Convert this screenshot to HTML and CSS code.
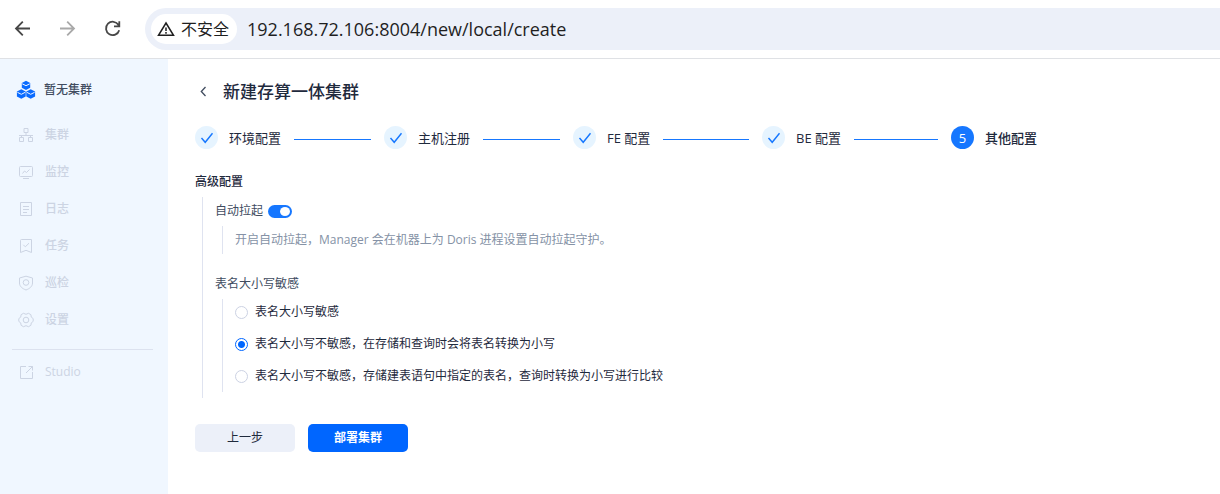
FILE: index.html
```html
<!DOCTYPE html>
<html lang="zh-CN">
<head>
  <meta charset="UTF-8" />
  <meta name="viewport" content="width=device-width, initial-scale=1" />
  <title>新建存算一体集群</title>
  <link rel="stylesheet" href="styles.css">
</head>
<body>

  <header class="toolbar">
    <button type="button" class="tool-btn" aria-label="后退">
      <svg width="20" height="20" viewBox="0 0 20 20"><path d="M17 9.500H3.500M9.800 2.700L3 9.500l6.800 6.800" /></svg>
    </button>
    <button type="button" class="tool-btn" aria-label="前进" disabled>
      <svg width="20" height="20" viewBox="0 0 20 20"><path d="M2 9.500h13.500M9.200 2.700l6.800 6.800-6.800 6.800" /></svg>
    </button>
    <button type="button" class="tool-btn" aria-label="刷新">
      <svg width="20" height="20" viewBox="0 0 20 20"><path d="M15.500 6A6.700 6.700 0 1 0 16.200 11.200M16.300 2.300v5h-5.300" /></svg>
    </button>
    <div class="address">
      <button type="button" class="security">
        <svg width="18" height="18" viewBox="0 0 18 18"><path d="M9 3L16.500 15.300H1.500zM9 7.500v3.500M9 12v1.800" /></svg>
        不安全
      </button>
      <input class="url" type="text" value="192.168.72.106:8004/new/local/create" aria-label="地址" />
    </div>
  </header>

  <div class="layout">
    <aside class="sidebar">
      <div class="cluster">
        <svg class="cluster-icon" width="20" height="20" viewBox="0 0 20 20">
          <path class="cube" d="M10 .8l4.200 2.300v4.700L10 10.100 5.800 7.800V3.100zM5.300 9.200l4.400 2.400v4.800l-4.400 2.400-4.400-2.400v-4.800zM14.700 9.200l4.400 2.400v4.800l-4.400 2.400-4.400-2.400v-4.800z" />
          <path class="cube-edge" d="M6.200 3.800L10 5.700l3.800-1.900M1.400 12.300l3.900 2 3.900-2M10.800 12.300l3.900 2 3.900-2" />
        </svg>
        <span>暂无集群</span>
      </div>
      <nav class="menu">
        <a href="#cluster">
          <svg width="16" height="16" viewBox="0 0 16 16"><path d="M6 1.500h4v4H6zM8 5.500V8M1 8.500h14M3.500 8.500v2M12.500 8.500v2M1.500 10.500h4v4h-4zM10.500 10.500h4v4h-4z" /></svg>
          集群
        </a>
        <a href="#monitor">
          <svg width="16" height="16" viewBox="0 0 16 16"><path d="M2.500 2.500h11a1 1 0 0 1 1 1v8a1 1 0 0 1-1 1h-11a1 1 0 0 1-1-1v-8a1 1 0 0 1 1-1zM4.500 9.500l2-2.500 2 1.500 3-3M5 14.500h6" /></svg>
          监控
        </a>
        <a href="#log">
          <svg width="16" height="16" viewBox="0 0 16 16"><path d="M2.500 1.500h11v13h-11zM5 5.500h6M5 8.500h6M5 11.500h4" /></svg>
          日志
        </a>
        <a href="#task">
          <svg width="16" height="16" viewBox="0 0 16 16"><path d="M2.500 14.500v-12a1 1 0 0 1 1-1h10v13L8 12.300zM5.300 6.800l2 2 3.700-3.600" /></svg>
          任务
        </a>
        <a href="#inspect">
          <svg width="16" height="16" viewBox="0 0 16 16"><path d="M8 1.200l6.500 1.800v5c0 3.400-2.800 5.600-6.500 7-3.700-1.400-6.500-3.600-6.500-7V3z" /><circle cx="8" cy="7.500" r="2.800" /></svg>
          巡检
        </a>
        <a href="#settings">
          <svg width="16" height="16" viewBox="0 0 16 16"><path d="M5.500 1.300Q8 3.300 10.500 1.300L12.900 2.700Q12.500 5.600 15.200 6.600V9.400Q12.500 10.400 12.900 13.300L10.500 14.700Q8 12.700 5.500 14.700L3.100 13.300Q3.500 10.400.8 9.400V6.600Q3.500 5.600 3.100 2.700z" /><circle cx="8" cy="8" r="2.800" /></svg>
          设置
        </a>
      </nav>
      <nav class="menu menu-extra">
        <a href="#studio">
          <svg width="16" height="16" viewBox="0 0 16 16"><path d="M8 2.500H2.500v12h12V8M10.500 2.500h4v4M14.500 2.500L8 9" /></svg>
          Studio
        </a>
      </nav>
    </aside>

    <main class="content">
      <div class="page-title">
        <a class="back" href="#back" aria-label="返回">
          <svg width="16" height="16" viewBox="0 0 16 16"><path d="M10.500 3L6.300 7.500l4.200 4.500" /></svg>
        </a>
        <h1>新建存算一体集群</h1>
      </div>

      <ol class="steps">
        <li class="step">
          <span class="step-icon"><svg width="14" height="14" viewBox="0 0 14 14"><path d="M1.500 7l3.700 4.300 7.300-9" /></svg></span>
          <span class="step-name">环境配置</span>
        </li>
        <li class="step">
          <span class="step-icon"><svg width="14" height="14" viewBox="0 0 14 14"><path d="M1.500 7l3.700 4.300 7.300-9" /></svg></span>
          <span class="step-name">主机注册</span>
        </li>
        <li class="step">
          <span class="step-icon"><svg width="14" height="14" viewBox="0 0 14 14"><path d="M1.500 7l3.700 4.300 7.300-9" /></svg></span>
          <span class="step-name">FE 配置</span>
        </li>
        <li class="step">
          <span class="step-icon"><svg width="14" height="14" viewBox="0 0 14 14"><path d="M1.500 7l3.700 4.300 7.300-9" /></svg></span>
          <span class="step-name">BE 配置</span>
        </li>
        <li class="step current" aria-current="step">
          <span class="step-icon">5</span>
          <span class="step-name">其他配置</span>
        </li>
      </ol>

      <form class="config">
        <h2>高级配置</h2>
        <div class="config-body">
          <div class="field">
            <div class="field-label">
              <label for="autoStart">自动拉起</label>
              <input type="checkbox" class="switch" id="autoStart" role="switch" checked />
            </div>
            <p class="hint">开启自动拉起，Manager 会在机器上为 Doris 进程设置自动拉起守护。</p>
          </div>

          <div class="field" role="radiogroup" aria-labelledby="caseLabel">
            <div class="field-label" id="caseLabel">表名大小写敏感</div>
            <div class="options">
              <label><input type="radio" name="tableCase" value="0" />表名大小写敏感</label>
              <label><input type="radio" name="tableCase" value="1" checked />表名大小写不敏感，在存储和查询时会将表名转换为小写</label>
              <label><input type="radio" name="tableCase" value="2" />表名大小写不敏感，存储建表语句中指定的表名，查询时转换为小写进行比较</label>
            </div>
          </div>
        </div>

        <div class="actions">
          <button type="button" class="btn">上一步</button>
          <button type="submit" class="btn btn-primary">部署集群</button>
        </div>
      </form>
    </main>
  </div>

</body>
</html>
```

FILE: styles.css
```css
/* Reset & Base */
* { box-sizing: border-box; margin: 0; padding: 0; }
body {
  font-family: "Open Sans", "Noto Sans CJK SC", sans-serif;
  font-size: 12px;
  line-height: 20px;
  background: #fff;
  color: #1f2a3d;
  display: flex;
  flex-direction: column;
  min-height: 100vh;
}
a { color: inherit; text-decoration: none; }
button, input { font: inherit; }
button { border: none; cursor: pointer; }
svg {
  display: block;
  flex: none;
  fill: none;
  stroke: currentColor;
}

/* Browser toolbar */
.toolbar {
  display: flex;
  align-items: center;
  gap: 25px;
  height: 59px;
  padding-left: 13px;
  border-bottom: 1px solid #dfe1e5;
}
.tool-btn {
  background: none;
  color: #474747;
}
.tool-btn:disabled { color: #a9a9a9; }
.tool-btn svg { stroke-width: 1.8; }
.address {
  flex: 1;
  display: flex;
  align-items: center;
  gap: 10px;
  height: 42px;
  margin-left: -3px;
  padding-left: 6px;
  background: #ecf0f9;
  border-radius: 21px 0 0 21px;
}
.security {
  display: flex;
  align-items: center;
  gap: 6px;
  height: 30px;
  padding: 0 8px 0 6px;
  border-radius: 15px;
  background: #fff;
  color: #1f1f1f;
  font-size: 16px;
}
.security svg { stroke-width: 1.5; }
.url {
  flex: 1;
  min-width: 0;
  border: none;
  outline: none;
  background: none;
  color: #1f1f1f;
  font-size: 18px;
}

/* Layout */
.layout {
  flex: 1;
  display: flex;
}

/* Sidebar */
.sidebar {
  width: 168px;
  padding: 21px 15px 0 12px;
  background: #f0f7ff;
}
.cluster {
  display: flex;
  align-items: center;
  gap: 8px;
  padding-left: 4px;
  color: #414c5f;
  font-weight: 500;
}
.cube { fill: #0a6bff; stroke: none; }
.cube-edge { stroke: #f0f7ff; }
.menu {
  display: flex;
  flex-direction: column;
  gap: 17px;
  padding: 25px 0 19px 6px;
  color: #ccd4e3;
  font-weight: 500;
}
.menu a {
  display: flex;
  align-items: center;
  gap: 11px;
}
.menu-extra {
  padding-top: 12px;
  border-top: 1px solid #dce2ef;
  font-weight: 400;
}

/* Content */
.content {
  flex: 1;
  padding: 20px 27px;
}
.page-title {
  display: flex;
  align-items: center;
  gap: 12px;
}
.back { color: #414c5f; }
.back svg { stroke-width: 1.3; }
h1 {
  font-size: 17px;
  font-weight: 500;
  line-height: 26px;
}

/* Steps */
.steps {
  display: flex;
  max-width: 842px;
  margin-top: 21px;
  list-style: none;
  font-size: 13px;
}
.step {
  flex: 1;
  display: flex;
  align-items: center;
}
.step:not(.current)::after {
  content: "";
  flex: 1;
  height: 1px;
  margin: 3px 13px 0;
  background: #1677ff;
}
.step-icon {
  display: flex;
  align-items: center;
  justify-content: center;
  width: 23px;
  height: 23px;
  margin-right: 11px;
  border-radius: 50%;
  background: #e6f4ff;
  color: #1677ff;
}
.step-icon svg { stroke-width: 1.4; }
.step.current { flex: none; font-weight: 500; }
.step.current .step-icon {
  background: #1677ff;
  color: #fff;
  font-weight: 400;
}

/* Form */
h2 {
  margin-top: 23px;
  font-size: 12px;
  font-weight: 500;
}
.config-body {
  display: flex;
  flex-direction: column;
  gap: 20px;
  margin: 5px 0 0 7px;
  padding: 4px 0 6px 12px;
  border-left: 1px solid #dfe3f0;
}
.field-label {
  display: flex;
  align-items: center;
  gap: 5px;
  color: #414c5f;
}
.hint, .options {
  margin: 5px 0 0 7px;
  padding-left: 12px;
  border-left: 1px solid #dfe3f0;
}
.hint {
  padding-top: 4px;
  padding-bottom: 4px;
  color: #8592a6;
}
.switch {
  appearance: none;
  display: flex;
  justify-content: flex-end;
  width: 24px;
  height: 13px;
  padding: 2px;
  border-radius: 7px;
  background: #c3cad9;
  cursor: pointer;
}
.switch::before {
  content: "";
  width: 10px;
  border-radius: 50%;
  background: #fff;
}
.switch:not(:checked) { justify-content: flex-start; }
.switch:checked { background: #1677ff; }
.options {
  display: flex;
  flex-direction: column;
  gap: 12px;
  padding-top: 3px;
  padding-bottom: 6px;
}
.options label {
  display: flex;
  align-items: center;
  gap: 7px;
}
.options input {
  appearance: none;
  flex: none;
  width: 13px;
  height: 13px;
  border: 1px solid #ccd2e3;
  border-radius: 50%;
}
.options input:checked {
  border-color: #0066ff;
  background: radial-gradient(circle, #0066ff 3px, #fff 4px);
}

/* Buttons */
.actions {
  display: flex;
  gap: 13px;
  margin-top: 26px;
}
.btn {
  width: 100px;
  height: 28px;
  border-radius: 5px;
  background: #ecf0f9;
  color: #1f2a3d;
}
.btn-primary {
  background: #0066ff;
  color: #fff;
  font-weight: 700;
}
```
